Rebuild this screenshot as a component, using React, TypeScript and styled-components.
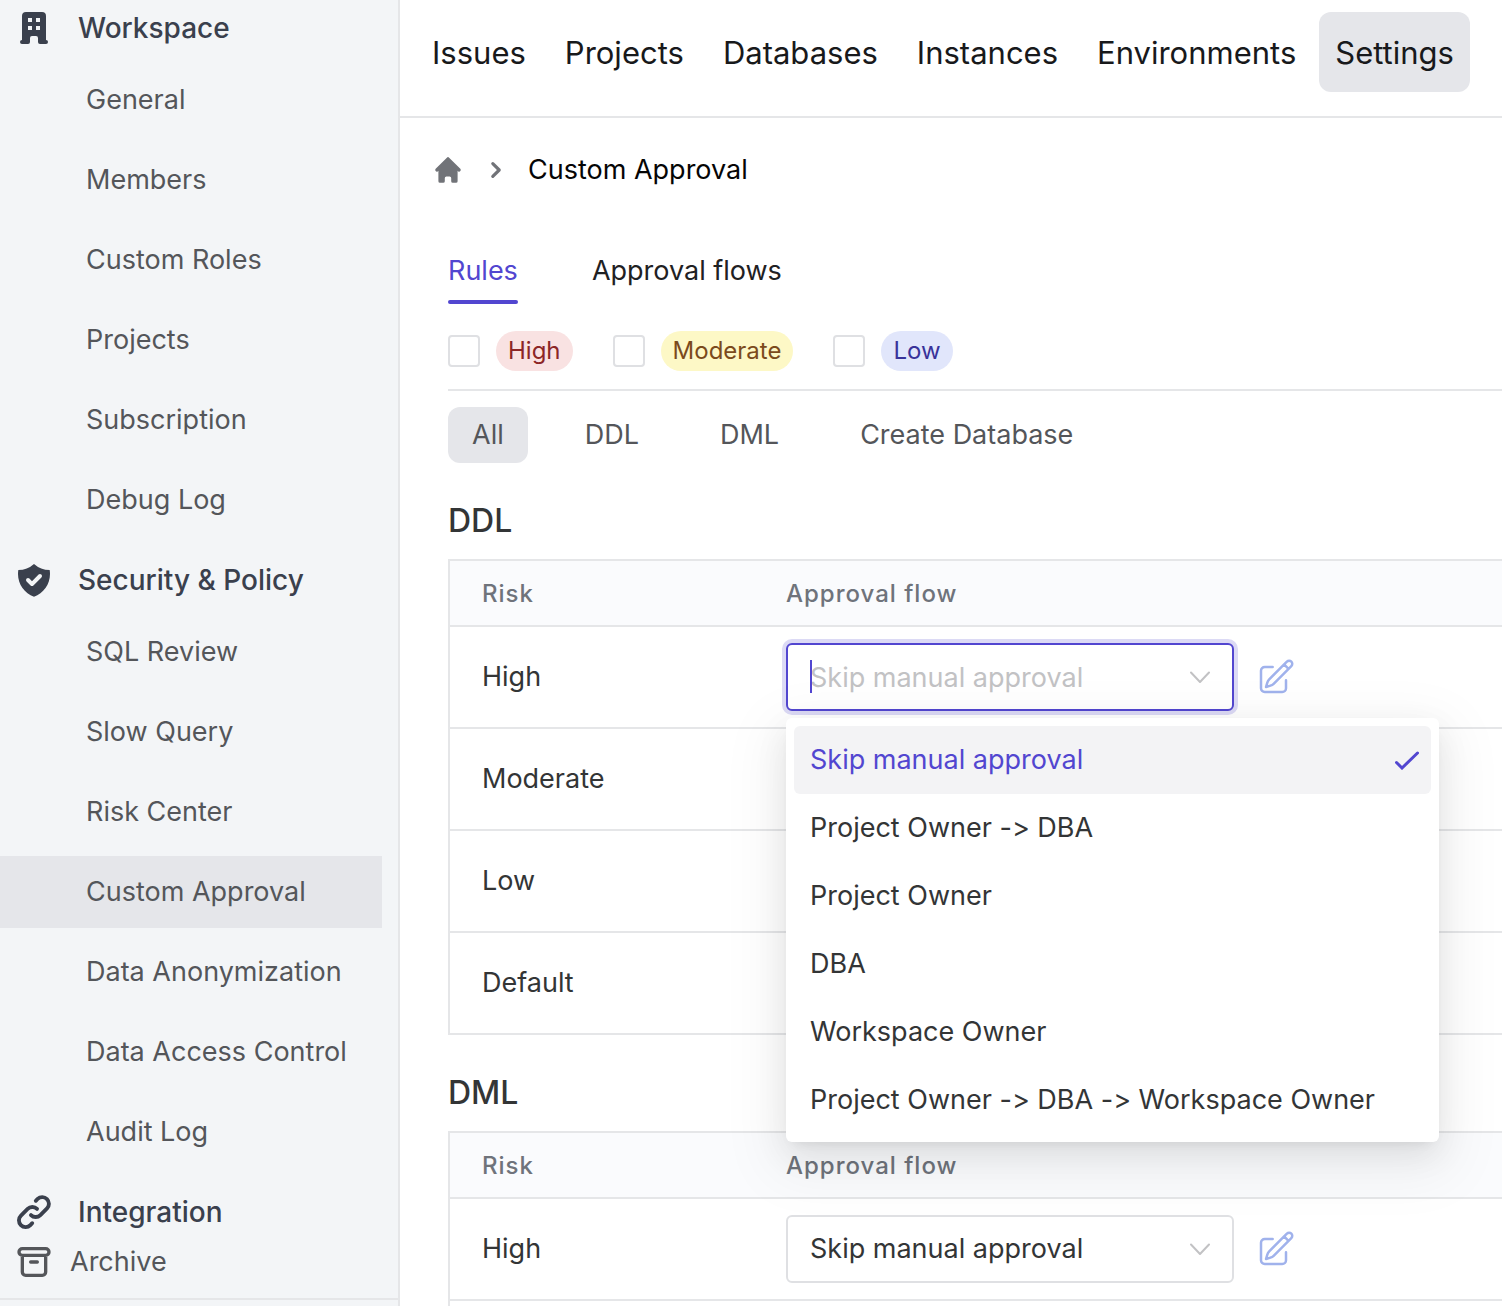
import React, { useState } from "react";
import styled, { createGlobalStyle, css } from "styled-components";

const color = {
  accent: "#5246d0",
  line: "#e5e6e8",
  field: "#dfe0e3",
  sidebar: "#f3f5f7",
  active: "#e5e6ea",
  heading: "#3a404d",
  body: "#333536",
  muted: "#54565a",
};

const GlobalStyle = createGlobalStyle`
  *, *::before, *::after { box-sizing: border-box; }
  body {
    margin: 0;
    background: #fff;
    color: ${color.body};
    font-family: Inter, "Liberation Sans", sans-serif;
    font-size: 27px;
    font-feature-settings: "calt" 0;
    line-height: 40px;
  }
  h2, ul, ol { margin: 0; padding: 0; }
  ul, ol { list-style: none; }
  a { color: inherit; text-decoration: none; }
  button, input, select { font: inherit; color: inherit; }
  button { background: none; border: 0; padding: 0; cursor: pointer; }
  svg { display: block; flex: none; }
`;

const Shell = styled.div`
  display: flex;
  height: 100vh;
  overflow: hidden;
`;

const Sidebar = styled.aside`
  flex: none;
  width: 400px;
  display: flex;
  flex-direction: column;
  background: ${color.sidebar};
  border-right: 2px solid ${color.line};
`;

const SideNav = styled.nav`
  flex: 1;
  min-height: 0;
  overflow: hidden;
  padding-top: 4px;
`;

const Group = styled.section`
  margin-bottom: 20px;
`;

const GroupTitle = styled.h2`
  display: flex;
  align-items: center;
  gap: 24px;
  height: 48px;
  margin-bottom: 12px;
  padding-left: 14px;
  font-size: 28px;
  font-weight: 500;
  color: ${color.heading};
`;

const GroupList = styled.ul`
  display: flex;
  flex-direction: column;
  gap: 8px;
  margin-right: 16px;
`;

const SideLink = styled.a<{ $active?: boolean }>`
  display: block;
  padding: 16px 16px 16px 86px;
  color: ${color.muted};
  background: ${(p) => (p.$active ? color.active : "transparent")};
`;

const SideFooter = styled.div`
  flex: none;
  padding-bottom: 6px;
`;

const ArchiveLink = styled.a`
  display: flex;
  align-items: center;
  gap: 16px;
  height: 68px;
  padding: 0 0 6px 14px;
  color: ${color.muted};
  border-bottom: 2px solid ${color.line};
`;

const Main = styled.main`
  flex: 1;
  min-width: 0;
  overflow: hidden;
`;

const TopNav = styled.nav`
  display: flex;
  gap: 7px;
  padding: 12px 16px 24px;
  border-bottom: 2px solid ${color.line};
`;

const TopLink = styled.a<{ $active?: boolean }>`
  padding: 21px 16px 19px;
  border-radius: 12px;
  font-size: 31px;
  color: #18191b;
  background: ${(p) => (p.$active ? color.active : "transparent")};
`;

const Breadcrumb = styled.ol`
  display: flex;
  align-items: center;
  gap: 16px;
  padding: 32px 32px 0;
  color: #717378;
`;

const Current = styled.li`
  color: #050505;
`;

const Content = styled.div`
  padding: 56px 0 0 48px;
`;

const Tabs = styled.div`
  display: flex;
  gap: 74px;
`;

const Tab = styled.button<{ $active: boolean }>`
  position: relative;
  height: 58px;
  padding: 5px 0 13px;
  color: ${(p) => (p.$active ? color.accent : "#1f2123")};
  ${(p) =>
    p.$active &&
    css`
      &::after {
        content: "";
        position: absolute;
        left: 0;
        right: 0;
        bottom: 0;
        height: 4px;
        border-radius: 2px;
        background: ${color.accent};
      }
    `}
`;

const Filters = styled.div`
  display: flex;
  gap: 40px;
  padding: 27px 0 18px;
  border-bottom: 2px solid ${color.line};
`;

const Filter = styled.label`
  display: flex;
  align-items: center;
  gap: 16px;
`;

const Checkbox = styled.input`
  appearance: none;
  width: 32px;
  height: 32px;
  margin: 0;
  border: 2px solid ${color.field};
  border-radius: 4px;
  background: #fff;
  &:checked {
    background: ${color.accent};
    border-color: ${color.accent};
  }
`;

const tones = {
  high: ["#f9e2e2", "#8c2626"],
  moderate: ["#fdf8c6", "#7b4a1c"],
  low: ["#e1e6fb", "#39339a"],
};

const Badge = styled.span<{ $tone: keyof typeof tones }>`
  padding: 0 12px;
  border-radius: 20px;
  font-size: 24px;
  background: ${(p) => tones[p.$tone][0]};
  color: ${(p) => tones[p.$tone][1]};
`;

const Kinds = styled.div`
  display: flex;
  gap: 33px;
  padding-top: 16px;
`;

const Kind = styled.button<{ $active: boolean }>`
  padding: 8px 24px;
  border-radius: 12px;
  color: ${color.muted};
  background: ${(p) => (p.$active ? color.active : "transparent")};
`;

const RuleSection = styled.section`
  padding-top: 32px;
`;

const RuleTitle = styled.h2`
  margin-bottom: 12px;
  font-size: 32px;
  font-weight: 500;
  line-height: 52px;
`;

const Table = styled.table`
  width: 100%;
  border-spacing: 0;
  table-layout: fixed;
  border: 2px solid ${color.line};
  border-right: 0;
`;

const HeadCell = styled.th`
  height: 64px;
  padding: 2px 32px 0;
  text-align: left;
  font-size: 24px;
  font-weight: 500;
  letter-spacing: 1px;
  color: #6f737b;
  background: #fafbfd;
  &:first-child {
    width: 304px;
  }
`;

const Cell = styled.td`
  height: 102px;
  padding: 0 32px;
  border-top: 2px solid ${color.line};
`;

const FlowRow = styled.div`
  display: flex;
  align-items: center;
  gap: 22px;
`;

const Field = styled.div`
  position: relative;
  width: 448px;
`;

const control = css`
  display: block;
  appearance: none;
  width: 100%;
  height: 68px;
  padding: 0 64px 0 22px;
  border: 2px solid ${color.field};
  border-radius: 6px;
  background: #fff;
  outline: none;
`;

const Select = styled.select`
  ${control}
`;

const ComboInput = styled.input`
  ${control}
  border-color: ${color.accent};
  box-shadow: 0 0 0 4px #dcdaf5;
  caret-color: transparent;
  &::placeholder {
    color: #c2c2c4;
    opacity: 1;
  }
`;

const Caret = styled.span`
  position: absolute;
  left: 24px;
  top: 17px;
  width: 2px;
  height: 33px;
  background: ${color.accent};
`;

const Arrow = styled.span`
  position: absolute;
  right: 24px;
  top: 28px;
  color: #c2c2c4;
  pointer-events: none;
`;

const Menu = styled.ul`
  position: absolute;
  z-index: 10;
  top: 75px;
  left: 0;
  width: max-content;
  padding: 8px;
  border-radius: 6px;
  background: #fff;
  box-shadow:
    0 6px 12px -8px rgba(0, 0, 0, 0.12),
    0 12px 32px 0 rgba(0, 0, 0, 0.08),
    0 18px 56px 16px rgba(0, 0, 0, 0.05);
`;

const Option = styled.li<{ $selected: boolean }>`
  display: flex;
  align-items: center;
  justify-content: space-between;
  height: 68px;
  padding: 0 ${(p) => (p.$selected ? 12 : 56)}px 0 16px;
  border-radius: 6px;
  white-space: nowrap;
  color: ${(p) => (p.$selected ? color.accent : color.body)};
  background: ${(p) => (p.$selected ? "#f3f3f5" : "transparent")};
`;

const EditButton = styled.button`
  color: #a0b2ec;
`;

const solid = {
  building:
    "M4 4a2 2 0 012-2h8a2 2 0 012 2v12a1 1 0 110 2h-3a1 1 0 01-1-1v-2a1 1 0 00-1-1H9a1 1 0 00-1 1v2a1 1 0 01-1 1H4a1 1 0 110-2V4zm3 1h2v2H7V5zm2 4H7v2h2V9zm2-4h2v2h-2V5zm2 4h-2v2h2V9z",
  shield:
    "M2.166 4.999A11.954 11.954 0 0010 1.944 11.954 11.954 0 0017.834 5c.11.65.166 1.32.166 2.001 0 5.225-3.34 9.67-8 11.317C5.34 16.67 2 12.225 2 7c0-.682.057-1.35.166-2.001zm11.541 3.708a1 1 0 00-1.414-1.414L9 10.586 7.707 9.293a1 1 0 00-1.414 1.414l2 2a1 1 0 001.414 0l4-4z",
  home: "M10.707 2.293a1 1 0 00-1.414 0l-7 7a1 1 0 001.414 1.414L4 10.414V17a1 1 0 001 1h2a1 1 0 001-1v-2a1 1 0 011-1h2a1 1 0 011 1v2a1 1 0 001 1h2a1 1 0 001-1v-6.586l.293.293a1 1 0 001.414-1.414l-7-7z",
  chevron:
    "M7.293 14.707a1 1 0 010-1.414L10.586 10 7.293 6.707a1 1 0 011.414-1.414l4 4a1 1 0 010 1.414l-4 4a1 1 0 01-1.414 0z",
};

const outline = {
  link: "M13.828 10.172a4 4 0 00-5.656 0l-4 4a4 4 0 105.656 5.656l1.102-1.101m-.758-4.899a4 4 0 005.656 0l4-4a4 4 0 00-5.656-5.656l-1.1 1.1",
  archive:
    "M5 8h14M5 8a2 2 0 110-4h14a2 2 0 110 4M5 8v10a2 2 0 002 2h10a2 2 0 002-2V8m-9 4h4",
  edit: "m16.862 4.487 1.687-1.688a1.875 1.875 0 1 1 2.652 2.652L10.582 16.07a4.5 4.5 0 0 1-1.897 1.13L6 18l.8-2.685a4.5 4.5 0 0 1 1.13-1.897l8.932-8.931Zm0 0L19.5 7.125M18 14v4.75A2.25 2.25 0 0 1 15.75 21H5.25A2.25 2.25 0 0 1 3 18.75V8.25A2.25 2.25 0 0 1 5.25 6H10",
};

const SolidIcon = ({ name, size = 40 }: { name: keyof typeof solid; size?: number }) => (
  <svg width={size} height={size} viewBox="0 0 20 20" fill="currentColor" aria-hidden="true">
    <path fillRule="evenodd" clipRule="evenodd" d={solid[name]} />
  </svg>
);

const OutlineIcon = ({ name, weight = 2 }: { name: keyof typeof outline; weight?: number }) => (
  <svg
    width="40"
    height="40"
    viewBox="0 0 24 24"
    fill="none"
    stroke="currentColor"
    strokeWidth={weight}
    strokeLinecap="round"
    strokeLinejoin="round"
    aria-hidden="true"
  >
    <path d={outline[name]} />
  </svg>
);

const ArrowIcon = () => (
  <Arrow>
    <svg width="20" height="13" viewBox="0 0 20 13" fill="none" stroke="currentColor" strokeWidth="2" strokeLinecap="round" strokeLinejoin="round">
      <path d="M1 1.5l9 9.5 9-9.5" />
    </svg>
  </Arrow>
);

const CheckIcon = () => (
  <svg width="24" height="20" viewBox="0 0 24 20" fill="none" stroke="currentColor" strokeWidth="3" strokeLinecap="round">
    <path d="M1.5 12.5l5.5 5.5L22.5 3" />
  </svg>
);

const groups = [
  {
    title: "Workspace",
    icon: <SolidIcon name="building" />,
    items: ["General", "Members", "Custom Roles", "Projects", "Subscription", "Debug Log"],
  },
  {
    title: "Security & Policy",
    icon: <SolidIcon name="shield" />,
    items: [
      "SQL Review",
      "Slow Query",
      "Risk Center",
      "Custom Approval",
      "Data Anonymization",
      "Data Access Control",
      "Audit Log",
    ],
  },
  { title: "Integration", icon: <OutlineIcon name="link" weight={2.3} />, items: [] },
];

const topLinks = ["Issues", "Projects", "Databases", "Instances", "Environments", "Settings"];
const kinds = ["All", "DDL", "DML", "Create Database"];
const flows = [
  "Skip manual approval",
  "Project Owner -> DBA",
  "Project Owner",
  "DBA",
  "Workspace Owner",
  "Project Owner -> DBA -> Workspace Owner",
];

const EditFlow = () => (
  <EditButton type="button" aria-label="Edit approval flow">
    <OutlineIcon name="edit" weight={1.5} />
  </EditButton>
);

const OpenFlow = () => (
  <FlowRow>
    <Field>
      <ComboInput
        role="combobox"
        aria-expanded="true"
        aria-controls="flow-options"
        aria-label="Approval flow"
        placeholder={flows[0]}
      />
      <Caret />
      <ArrowIcon />
      <Menu id="flow-options" role="listbox">
        {flows.map((flow, i) => (
          <Option key={flow} role="option" aria-selected={i === 0} $selected={i === 0}>
            {flow}
            {i === 0 && <CheckIcon />}
          </Option>
        ))}
      </Menu>
    </Field>
    <EditFlow />
  </FlowRow>
);

const ClosedFlow = () => (
  <FlowRow>
    <Field>
      <Select aria-label="Approval flow" defaultValue={flows[0]}>
        {flows.map((flow) => (
          <option key={flow}>{flow}</option>
        ))}
      </Select>
      <ArrowIcon />
    </Field>
    <EditFlow />
  </FlowRow>
);

type Rule = { risk: string; flow?: React.ReactNode };

const RuleTable = ({ title, rules }: { title: string; rules: Rule[] }) => (
  <RuleSection>
    <RuleTitle>{title}</RuleTitle>
    <Table>
      <thead>
        <tr>
          <HeadCell scope="col">Risk</HeadCell>
          <HeadCell scope="col">Approval flow</HeadCell>
        </tr>
      </thead>
      <tbody>
        {rules.map((rule) => (
          <tr key={rule.risk}>
            <Cell>{rule.risk}</Cell>
            <Cell>{rule.flow}</Cell>
          </tr>
        ))}
      </tbody>
    </Table>
  </RuleSection>
);

export default function App() {
  const [tab, setTab] = useState("Rules");
  const [kind, setKind] = useState("All");

  return (
    <>
      <GlobalStyle />
      <Shell>
        <Sidebar>
          <SideNav aria-label="Settings">
            {groups.map((group) => (
              <Group key={group.title}>
                <GroupTitle>
                  {group.icon}
                  {group.title}
                </GroupTitle>
                <GroupList>
                  {group.items.map((item) => (
                    <li key={item}>
                      <SideLink href="#" $active={item === "Custom Approval"}>
                        {item}
                      </SideLink>
                    </li>
                  ))}
                </GroupList>
              </Group>
            ))}
          </SideNav>
          <SideFooter>
            <ArchiveLink href="#">
              <OutlineIcon name="archive" />
              Archive
            </ArchiveLink>
          </SideFooter>
        </Sidebar>
        <Main>
          <TopNav aria-label="Main">
            {topLinks.map((link) => (
              <TopLink key={link} href="#" $active={link === "Settings"}>
                {link}
              </TopLink>
            ))}
          </TopNav>
          <Breadcrumb>
            <li>
              <a href="#" aria-label="Home">
                <SolidIcon name="home" size={32} />
              </a>
            </li>
            <li>
              <SolidIcon name="chevron" size={32} />
            </li>
            <Current>Custom Approval</Current>
          </Breadcrumb>
          <Content>
            <Tabs role="tablist">
              {["Rules", "Approval flows"].map((name) => (
                <Tab
                  key={name}
                  type="button"
                  role="tab"
                  aria-selected={tab === name}
                  $active={tab === name}
                  onClick={() => setTab(name)}
                >
                  {name}
                </Tab>
              ))}
            </Tabs>
            <Filters>
              <Filter>
                <Checkbox type="checkbox" />
                <Badge $tone="high">High</Badge>
              </Filter>
              <Filter>
                <Checkbox type="checkbox" />
                <Badge $tone="moderate">Moderate</Badge>
              </Filter>
              <Filter>
                <Checkbox type="checkbox" />
                <Badge $tone="low">Low</Badge>
              </Filter>
            </Filters>
            <Kinds>
              {kinds.map((name) => (
                <Kind key={name} type="button" $active={kind === name} onClick={() => setKind(name)}>
                  {name}
                </Kind>
              ))}
            </Kinds>
            <RuleTable
              title="DDL"
              rules={[
                { risk: "High", flow: <OpenFlow /> },
                { risk: "Moderate" },
                { risk: "Low" },
                { risk: "Default" },
              ]}
            />
            <RuleTable title="DML" rules={[{ risk: "High", flow: <ClosedFlow /> }, { risk: "" }]} />
          </Content>
        </Main>
      </Shell>
    </>
  );
}
